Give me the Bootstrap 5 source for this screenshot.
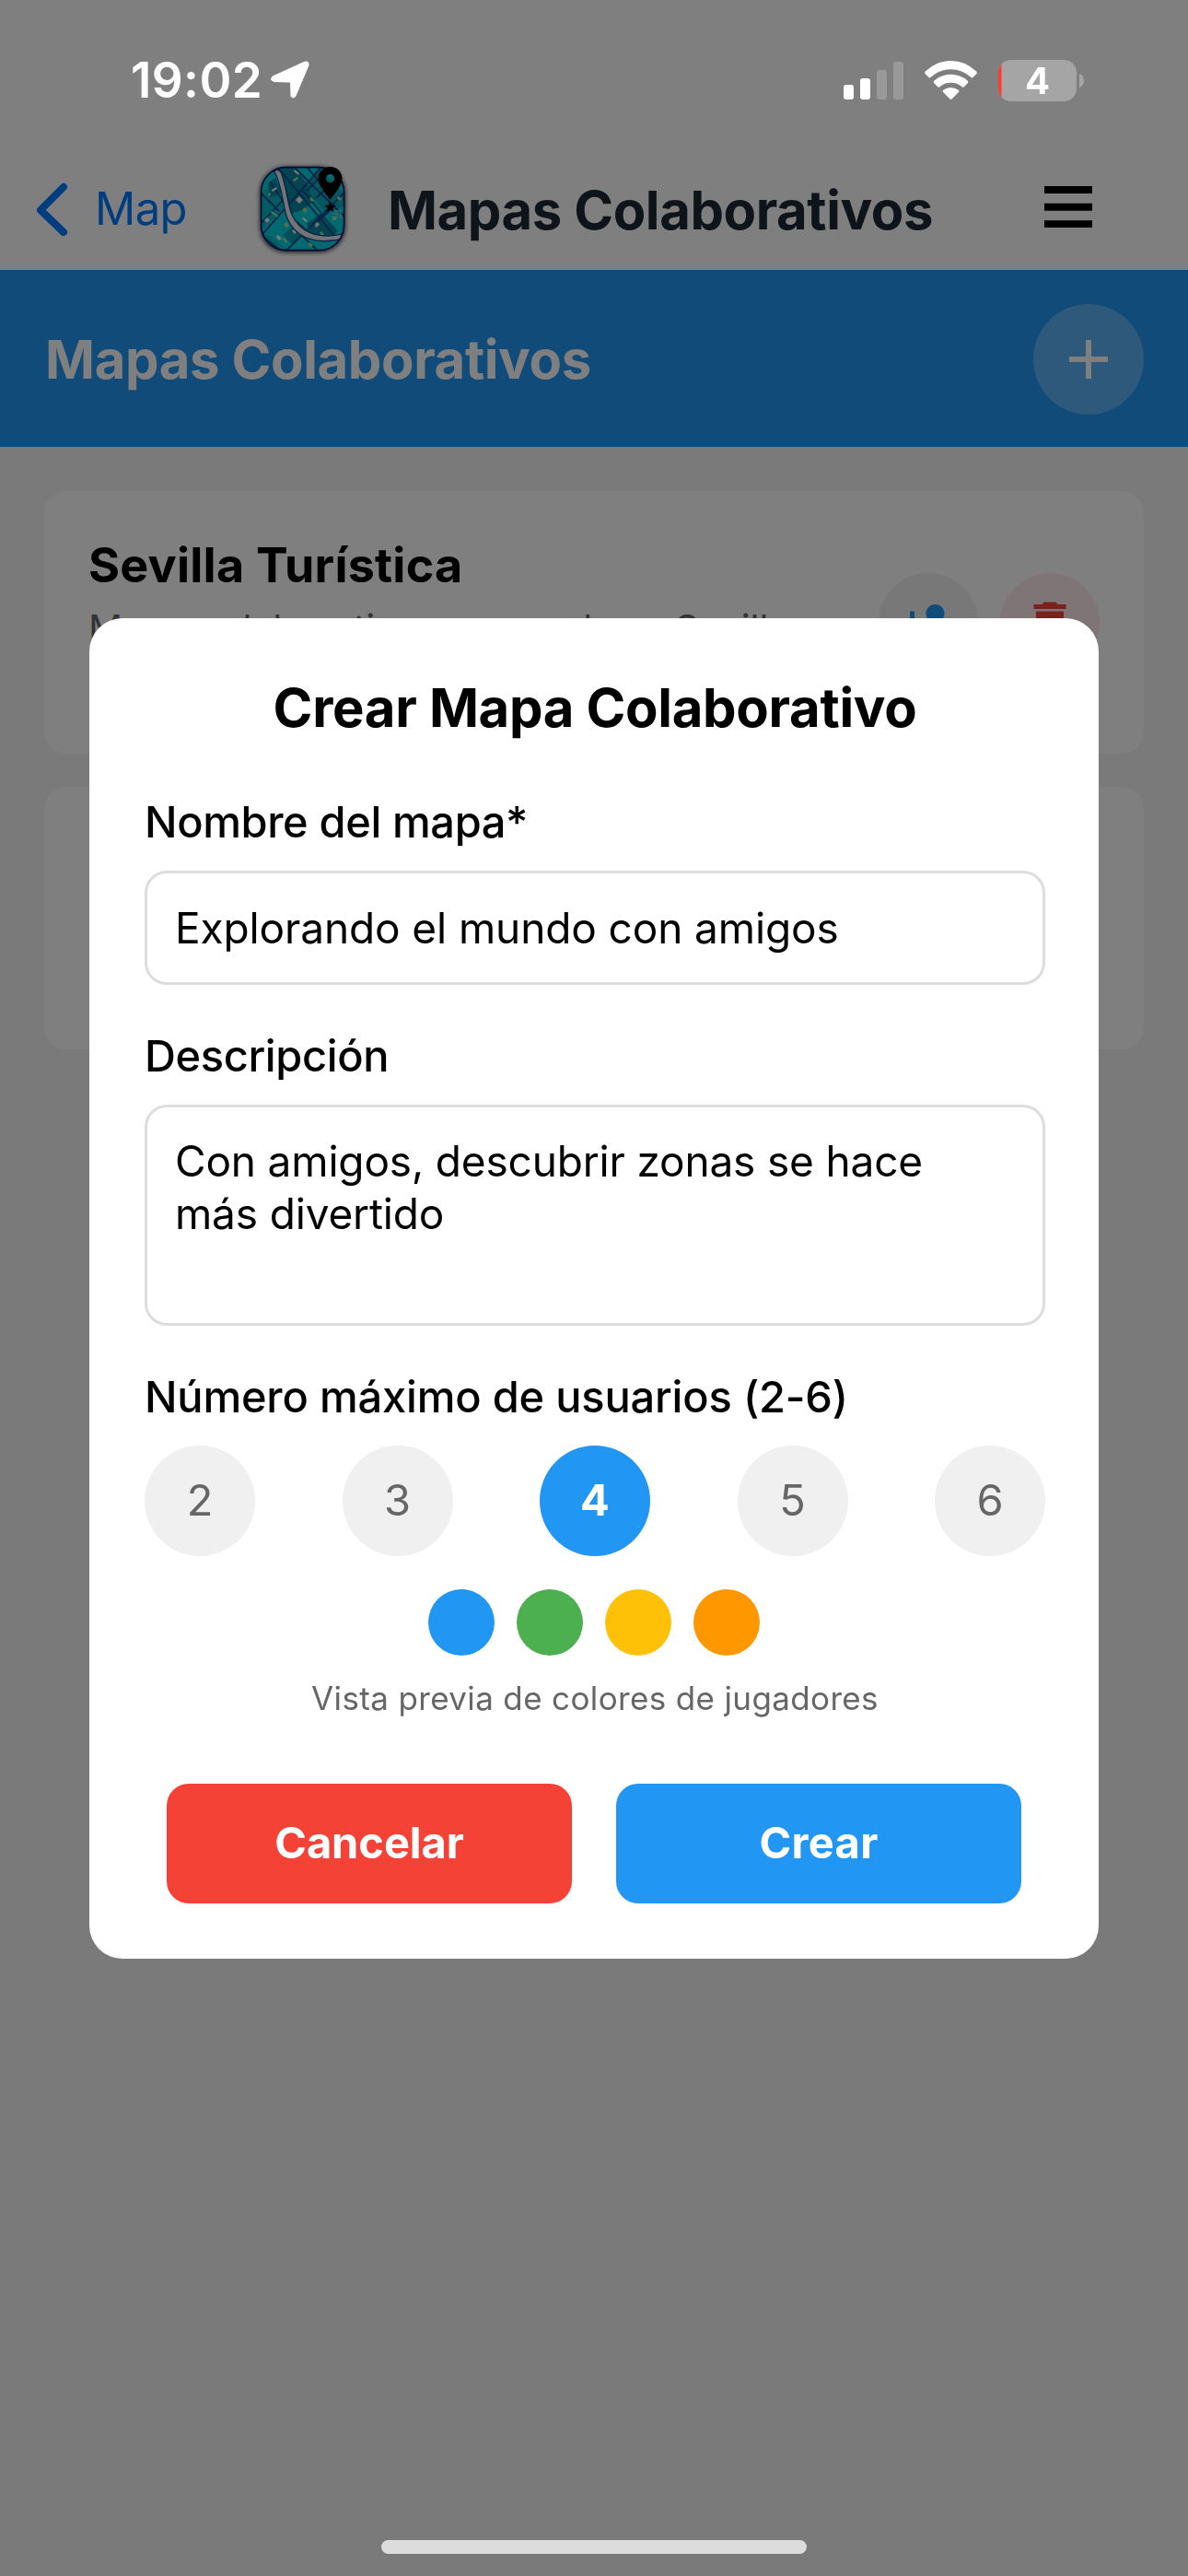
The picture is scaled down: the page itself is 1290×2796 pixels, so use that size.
<!DOCTYPE html>
<html lang="es">
<head>
<meta charset="utf-8">
<meta name="viewport" content="width=device-width, initial-scale=1">
<title>Mapas Colaborativos</title>
<link href="https://cdn.jsdelivr.net/npm/bootstrap@5.3.0/dist/css/bootstrap.min.css" rel="stylesheet">
<style>
  body { font-family: Inter, "Liberation Sans", sans-serif; background: #f5f5f5; color: #000; height: 2796px; overflow: hidden; }
  svg { display: block; flex: none; }

  /* System status bar, drawn over the dimmed page */
  .status-bar { height: 174px; padding: 0 113px 0 142px; z-index: 1070; color: #fff; pointer-events: none; }
  .clock { font-size: 53px; font-weight: 600; line-height: 1.1; letter-spacing: .4px; }
  .status-icons { gap: 23px; }
  .cell-level { width: 93px; height: 45px; font-size: 40px; font-weight: 700; line-height: 45px; }
  .cell-level span { padding-left: 29px; }
  .home-bar { width: 462px; height: 15px; bottom: 24px; z-index: 1070; background: #dcdcdc; }

  /* Navigation header */
  .top-nav { height: 293px; padding: 163px 104px 0 37px; background: #fff; }
  .back-link { font-size: 49px; letter-spacing: -.6px; color: #007aff; line-height: 1; width: 240px; gap: 28px; }
  .nav-title { font-size: 58px; font-weight: 700; letter-spacing: -.42px; color: #1c2833; line-height: 1; margin-left: 41px; }

  .section-bar { height: 192px; padding: 1px 48px 0 49px; background: #2196f3; }
  .section-title { font-size: 58px; font-weight: 700; letter-spacing: -.38px; line-height: 1; }
  .round-add { width: 120px; height: 120px; background: rgba(255,255,255,.27); }

  /* Map list */
  .map-list { padding: 48px; gap: 36px; }
  .map-card { height: 285px; border: 0; border-radius: 24px; padding: 48px; }
  .map-name { font-size: 52px; font-weight: 700; line-height: 66px; letter-spacing: .23px; }
  .map-desc { font-size: 41px; line-height: 50px; letter-spacing: -.1px; color: #666; margin-top: 10px; }
  .round-action { width: 108px; height: 108px; background: #f0f0f0; }
  .round-action.remove { background: #ffebee; }

  /* Create dialog */
  .create-dialog { max-width: 1096px; }
  .create-box { border: 0; border-radius: 36px; padding: 60px 58px 60px 60px; }
  .create-title { font-size: 58px; font-weight: 700; letter-spacing: -.32px; line-height: 74px; margin-bottom: 58px; }
  .field-label { font-size: 47px; font-weight: 500; line-height: 57px; letter-spacing: -.38px; margin-bottom: 25px; }
  .field-label.users { letter-spacing: -.2px; }
  .field-box { border: 3px solid #ddd; border-radius: 24px; padding: 0 30px; font-size: 46px; letter-spacing: -.12px; color: #000; margin-bottom: 48px; }
  input.field-box { height: 124px; }
  textarea.field-box { height: 240px; padding-top: 30px; line-height: 57.3px; letter-spacing: -.17px; resize: none; overflow: hidden; }
  .count-pill { width: 120px; height: 120px; background: #f0f0f0; color: #666; font-size: 47px; }
  .count-pill.chosen { background: #2196f3; color: #fff; font-weight: 700; }
  .dot-row { gap: 24px; margin: 36px 0 0 -2px; }
  .dot { width: 72px; height: 72px; }
  .hint { font-size: 35px; letter-spacing: .36px; line-height: 44px; color: #666; margin: 24px 0 71px; }
  .dialog-actions { gap: 48px; padding: 0 26px 0 24px; }
  .dialog-btn { height: 130px; border: 0; border-radius: 24px; font-size: 47px; font-weight: 700; color: #fff; }
  .btn-cancel { background: #f44336; letter-spacing: -.06px; }
  .btn-create { background: #2196f3; letter-spacing: .3px; }
</style>
</head>
<body class="modal-open">

<div class="status-bar fixed-top d-flex align-items-center">
  <span class="clock">19:02</span>
  <svg class="ms-2" width="46" height="44" viewBox="0 0 46 44"><path d="M5 24.500 L3 17.500 L37 2 Q43 0 42.500 6 L28.500 39 Q26 43.500 22.500 39.500 L22 25 Q22 24.500 21 24.500 L5 24 Q-1.500 22 3 17.500 Z" fill="#fff"/></svg>
  <div class="status-icons d-flex align-items-center ms-auto">
    <svg width="65" height="41" viewBox="0 0 65 41" fill="#fff"><rect y="25" width="11" height="16" rx="3"/><rect x="18" y="18" width="11" height="23" rx="3"/><rect x="36" y="9" width="11" height="32" rx="3" opacity=".2"/><rect x="54" width="11" height="41" rx="3" opacity=".2"/></svg>
    <svg width="57" height="42" viewBox="0 0 57 42" fill="#fff"><path d="M.8 11.500 Q13 0 28.500 0 T56.200 11.500 Q57.400 13 56 14.500 L52.500 18 Q51.500 19 50.200 17.800 Q41 9.200 28.500 9.200 T6.800 17.800 Q5.500 19 4.500 18 L1 14.500 Q-.4 13 .8 11.500 Z"/><path d="M10.500 21.500 Q18.500 14.800 28.500 14.800 T46.500 21.500 Q48 23 46.500 24.500 L42.500 28.400 Q41.500 29 40.500 28.200 Q35.500 23.800 28.500 23.800 T16.500 28.200 Q15.500 29 14.500 28.400 L10.500 24.500 Q9 23 10.500 21.500 Z"/><path d="M20.300 31.800 Q24 29 28.500 29 T36.700 31.800 Q38 33 36.700 34.300 L29.500 41.400 Q28.500 42.200 27.500 41.400 L20.300 34.300 Q19 33 20.300 31.800 Z"/></svg>
    <div class="cell-level position-relative">
      <svg class="position-absolute top-0 start-0" width="93" height="45" viewBox="0 0 93 45"><clipPath id="cell"><rect width="85" height="45" rx="14"/></clipPath><rect width="85" height="45" rx="14" fill="#a5a5a5"/><rect width="3.500" height="45" fill="#ff3b30" clip-path="url(#cell)"/><path d="M88 15 Q93 17 93 22.500 T88 30 Z" fill="#a5a5a5"/></svg>
      <span class="position-relative">4</span>
    </div>
  </div>
</div>

<header class="top-nav d-flex align-items-center">
  <a class="back-link d-flex align-items-center text-decoration-none" href="#">
    <svg width="38" height="60" viewBox="0 0 38 60"><path d="M32 5 L7 30 L32 54" fill="none" stroke="#007aff" stroke-width="8" stroke-linecap="round" stroke-linejoin="round"/></svg>
    <span class="mb-1">Map</span>
  </a>
  <svg class="mb-1" width="103" height="103" viewBox="-6 -6 103 103">
    <defs>
      <clipPath id="tile"><rect width="91" height="91" rx="27"/></clipPath>
      <filter id="glow" x="-20%" y="-20%" width="140%" height="140%"><feGaussianBlur stdDeviation="2.500"/></filter>
    </defs>
    <rect x="-1" y="0" width="93" height="93" rx="28" fill="#000" opacity=".75" filter="url(#glow)"/>
    <g clip-path="url(#tile)">
      <rect width="91" height="91" fill="#08d2dc"/>
      <g fill="#0886a0">
        <path d="M22 0H36L62 33L46 47L28 52L20 20Z"/><path d="M0 28L20 18L26 45L0 70Z" fill="#08b8c6"/><path d="M50 62L66 50L84 70L70 82L54 74Z"/><path d="M62 0L91 30V42L72 52L50 24Z" fill="#08aaba"/><path d="M24 74L38 62L48 72L34 84Z" fill="#089cae"/><path d="M0 72L12 76L30 91H0Z" fill="#08b6c2"/><path d="M8 18L16 12L22 28L10 34Z"/>
      </g>
      <g stroke="#104890" stroke-width="1.800" fill="none">
        <path d="M18 0L91 88M-4 80L70 -4M28 91L91 28M0 74L22 91M0 28L20 48M10 16L34 52M36 0L91 54M50 0L62 14L50 26M0 62L30 30M44 74L62 91M40 60L54 74M60 34L82 14M66 50L46 26M62 60L78 44"/>
      </g>
      <g fill="#f0f0f4">
        <path d="M42 32L46 36L42 40L38 36Z"/><path d="M7 55L10 58L7 61L4 58Z"/><path d="M37 67L40 70L37 73L34 70Z"/><path d="M19 74L23 78L20 80L17 76Z"/><path d="M59 62L62 60L64 63L60 66Z"/><path d="M12 25l5-3 1 2-5 3zM37 3l5 4-1 2-5-4zM47 55l4 4-2 1-4-4z"/>
      </g>
      <g fill="#a8e0a0">
        <path d="M12 48l7 5-1 2-7-5zM35 14l5-3 1 2-5 3zM28 60l3 3-3 3-3-3zM48 44l3 3-3 3-3-3zM25 77l4 4-1 2-4-4zM55 33l3 3-2 2-3-3zM84 32l4 2-1 3-4-2zM78 54h4v4h-4zM53 82l4 3-2 2-4-3zM8 30l2-2 1 2-2 3zM66 70l3 3-2 2-3-3z"/>
      </g>
      <path d="M79 48h8v7h-4v-4h-4z" fill="none" stroke="#7cc" stroke-width="1.400"/>
      <path d="M15 5Q18 1 22 6C28 20 29 40 34 52C43 71 62 80 94 72L93 77C62 86 38 78 29 56C24 44 24 22 15 5Z" fill="#e8e8ee" stroke="#104890" stroke-width="1.300"/>
    </g>
    <rect x=".6" y=".6" width="90" height="90" rx="27" fill="none" stroke="#101070" stroke-width="1.600"/>
    <path fill-rule="evenodd" d="M75.500 0C68 0 62.500 5.500 62.500 12.500C62.500 21 71 29 75.500 36C80 29 88.500 21 88.500 12.500C88.500 5.500 83 0 75.500 0ZM75.500 8A4.700 4.700 0 1 1 75.500 17.400A4.700 4.700 0 1 1 75.500 8Z"/>
    <path d="M75.500 37.500l1.700 4.300h4.600l-3.600 2.900 1.400 4.600-4.100-2.700-4.100 2.700 1.400-4.600-3.600-2.900h4.600z"/>
  </svg>
  <h1 class="nav-title mb-0">Mapas Colaborativos</h1>
  <svg class="ms-auto mb-2" width="52" height="45" viewBox="0 0 52 45"><path d="M0 0h52v8H0zM0 18.700h52v8H0zM0 37.300h52v8H0z"/></svg>
</header>

<div class="section-bar d-flex align-items-center justify-content-between text-white">
  <h2 class="section-title mb-0">Mapas Colaborativos</h2>
  <div class="round-add rounded-circle d-flex align-items-center justify-content-center">
    <svg width="42" height="42" viewBox="0 0 42 42"><path d="M0 18h18V0h6v18h18v6H24v18h-6V24H0z" fill="#fff"/></svg>
  </div>
</div>

<main class="map-list d-flex flex-column">
  <div class="map-card card flex-row align-items-center">
    <div class="align-self-start flex-grow-1">
      <div class="map-name">Sevilla Turística</div>
      <div class="map-desc">Mapa colaborativo para explorar Sevilla</div>
    </div>
    <div class="d-flex gap-4">
      <div class="round-action rounded-circle d-flex align-items-center justify-content-center"><svg width="60" height="60" viewBox="0 0 24 24" fill="#2196f3"><path d="M15 12c2.210 0 4-1.790 4-4s-1.790-4-4-4-4 1.790-4 4 1.790 4 4 4zm-9-2V7H4v3H1v2h3v3h2v-3h3v-2H6zm9 4c-2.670 0-8 1.340-8 4v2h16v-2c0-2.660-5.330-4-8-4z"/></svg></div>
      <div class="round-action remove rounded-circle d-flex align-items-center justify-content-center"><svg width="60" height="60" viewBox="0 0 24 24" fill="#f44336"><path d="M6 19c0 1.100.9 2 2 2h8c1.100 0 2-.9 2-2V7H6v12zM19 4h-3.500l-1-1h-5l-1 1H5v2h14V4z"/></svg></div>
    </div>
  </div>
  <div class="map-card card"></div>
</main>

<div class="modal-backdrop show"></div>
<div class="modal d-block show" tabindex="-1">
  <div class="modal-dialog modal-dialog-centered create-dialog">
    <form class="modal-content create-box">
      <h3 class="create-title text-center">Crear Mapa Colaborativo</h3>

      <label class="field-label" for="mapName">Nombre del mapa*</label>
      <input id="mapName" type="text" class="form-control field-box" value="Explorando el mundo con amigos">

      <label class="field-label" for="mapDesc">Descripción</label>
      <textarea id="mapDesc" class="form-control field-box" spellcheck="false">Con amigos, descubrir zonas se hace
más divertido</textarea>

      <div class="field-label users">Número máximo de usuarios (2-6)</div>
      <div class="d-flex justify-content-between">
        <div class="count-pill rounded-circle d-flex align-items-center justify-content-center">2</div>
        <div class="count-pill rounded-circle d-flex align-items-center justify-content-center">3</div>
        <div class="count-pill chosen rounded-circle d-flex align-items-center justify-content-center">4</div>
        <div class="count-pill rounded-circle d-flex align-items-center justify-content-center">5</div>
        <div class="count-pill rounded-circle d-flex align-items-center justify-content-center">6</div>
      </div>

      <div class="dot-row d-flex justify-content-center">
        <span class="dot rounded-circle" style="background:#2196f3"></span>
        <span class="dot rounded-circle" style="background:#4caf50"></span>
        <span class="dot rounded-circle" style="background:#ffc107"></span>
        <span class="dot rounded-circle" style="background:#ff9800"></span>
      </div>
      <p class="hint text-center">Vista previa de colores de jugadores</p>

      <div class="dialog-actions d-flex">
        <button type="button" class="btn dialog-btn btn-cancel flex-fill w-50">Cancelar</button>
        <button type="button" class="btn dialog-btn btn-create flex-fill w-50">Crear</button>
      </div>
    </form>
  </div>
</div>

<div class="home-bar position-fixed start-50 translate-middle-x rounded-pill"></div>

<script src="https://cdn.jsdelivr.net/npm/bootstrap@5.3.0/dist/js/bootstrap.bundle.min.js"></script>
</body>
</html>
